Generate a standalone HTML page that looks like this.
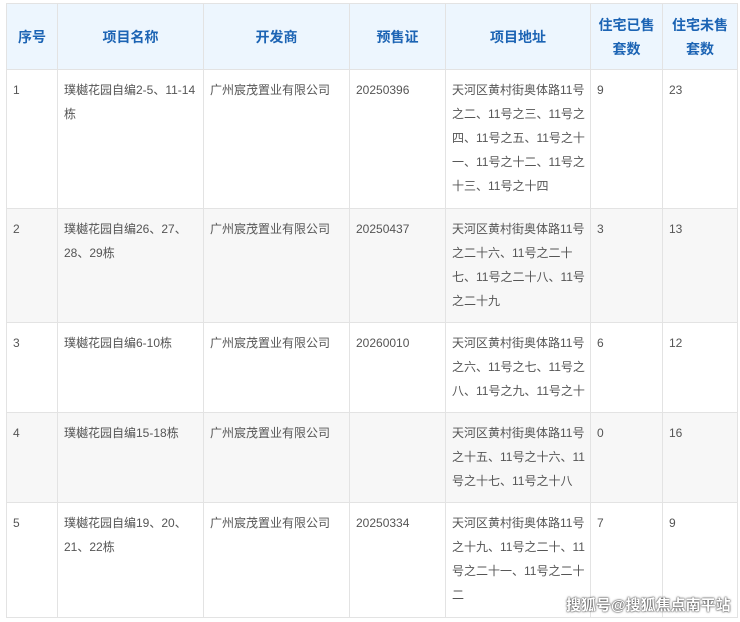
<!DOCTYPE html>
<html><head><meta charset="utf-8"><style>
body{margin:0;background:#fff;font-family:"Liberation Sans","Noto Sans CJK SC",sans-serif;}
table{position:absolute;left:6px;top:3px;border-collapse:collapse;table-layout:fixed;width:731px;}
td,th{border:1px solid #e3e3e3;font-size:12px;line-height:24px;color:#555;vertical-align:top;padding:8px 5px 0 6px;text-align:left;word-break:normal;}
th{background:#edf6fe;color:#1c64b4;font-size:14px;font-weight:bold;text-align:center;vertical-align:middle;padding:0 4px;line-height:24px;height:65px;}
tr.g td{background:#f7f7f7;}
.wm{position:absolute;left:566px;top:594px;font-size:15px;font-weight:bold;color:#fff;white-space:nowrap;text-shadow:0 0 2px #333,0 0 1px #333;}
</style></head><body>
<table>
<colgroup><col style="width:51px"><col style="width:146px"><col style="width:146px"><col style="width:96px"><col style="width:145px"><col style="width:72px"><col style="width:75px"></colgroup>
<tr><th>序号</th><th>项目名称</th><th>开发商</th><th>预售证</th><th>项目地址</th><th>住宅已售套数</th><th>住宅未售套数</th></tr>
<tr style="height:139px"><td>1</td><td>璞樾花园自编2-5、11-14栋</td><td>广州宸茂置业有限公司</td><td>20250396</td><td>天河区黄村街奥体路11号之二、11号之三、11号之四、11号之五、11号之十一、11号之十二、11号之十三、11号之十四</td><td>9</td><td>23</td></tr>
<tr class="g" style="height:114px"><td>2</td><td>璞樾花园自编26、27、<br>28、29栋</td><td>广州宸茂置业有限公司</td><td>20250437</td><td>天河区黄村街奥体路11号之二十六、11号之二十七、11号之二十八、11号之二十九</td><td>3</td><td>13</td></tr>
<tr style="height:90px"><td>3</td><td>璞樾花园自编6-10栋</td><td>广州宸茂置业有限公司</td><td>20260010</td><td>天河区黄村街奥体路11号之六、11号之七、11号之八、11号之九、11号之十</td><td>6</td><td>12</td></tr>
<tr class="g" style="height:90px"><td>4</td><td>璞樾花园自编15-18栋</td><td>广州宸茂置业有限公司</td><td></td><td>天河区黄村街奥体路11号之十五、11号之十六、11号之十七、11号之十八</td><td>0</td><td>16</td></tr>
<tr style="height:115px"><td>5</td><td>璞樾花园自编19、20、<br>21、22栋</td><td>广州宸茂置业有限公司</td><td>20250334</td><td>天河区黄村街奥体路11号之十九、11号之二十、11号之二十一、11号之二十二</td><td>7</td><td>9</td></tr>
</table>
<div class="wm">搜狐号@搜狐焦点南平站</div>
</body></html>
